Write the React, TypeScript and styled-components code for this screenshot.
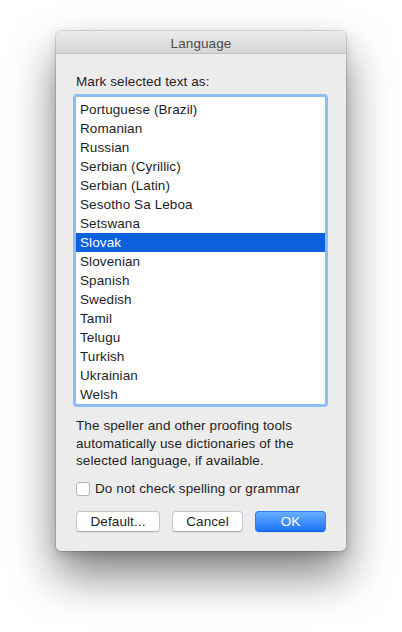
import React, { useState } from 'react'
import styled, { createGlobalStyle } from 'styled-components'

const languages = [
  'Portuguese (Brazil)',
  'Romanian',
  'Russian',
  'Serbian (Cyrillic)',
  'Serbian (Latin)',
  'Sesotho Sa Leboa',
  'Setswana',
  'Slovak',
  'Slovenian',
  'Spanish',
  'Swedish',
  'Tamil',
  'Telugu',
  'Turkish',
  'Ukrainian',
  'Welsh',
]

const GlobalStyle = createGlobalStyle`
  html, body {
    margin: 0;
    padding: 0;
    background: #ffffff;
  }
  body {
    font-family: 'Liberation Sans', Arial, sans-serif;
    -webkit-font-smoothing: antialiased;
  }
`

const Page = styled.div`
  width: 402px;
  height: 632px;
  display: flex;
  justify-content: center;
  padding-top: 31px;
  box-sizing: border-box;
`

const Window = styled.div`
  width: 290px;
  height: 520px;
  display: flex;
  flex-direction: column;
  background: #ececec;
  border-radius: 5px;
  box-shadow: 0 0 0 1px rgba(0, 0, 0, 0.12), 0 24px 46px rgba(0, 0, 0, 0.5),
    0 4px 10px rgba(0, 0, 0, 0.15);
  overflow: hidden;
`

const TitleBar = styled.div`
  height: 23px;
  padding-top: 2px;
  box-sizing: border-box;
  flex: none;
  display: flex;
  align-items: center;
  justify-content: center;
  background: linear-gradient(#ebebeb, #d6d6d6);
  border-bottom: 1px solid #c4c4c4;
  color: #4c4c4c;
  font-size: 13.5px;
  letter-spacing: 0.1px;
`

const Body = styled.div`
  display: flex;
  flex-direction: column;
  padding: 20px 20px 0 20px;
  color: #1e1e1e;
  font-size: 13.5px;
  letter-spacing: 0.1px;
`

const Label = styled.div`
  line-height: 16px;
  margin-bottom: 4px;
`

const ListBox = styled.div`
  width: 255px;
  height: 313px;
  margin-left: -3px;
  box-sizing: border-box;
  border: 3px solid #8fbcf4;
  border-radius: 4px;
  background: #ffffff;
  padding-top: 3px;
  overflow: hidden;
`

const Row = styled.div<{ $selected: boolean }>`
  height: 19px;
  line-height: 19px;
  padding-left: 4px;
  background: ${(p) => (p.$selected ? '#0b60dc' : 'transparent')};
  color: ${(p) => (p.$selected ? '#ffffff' : '#1e1e1e')};
  cursor: default;
`

const Description = styled.p`
  margin: 10px 0 0 0;
  line-height: 17.5px;
`

const CheckRow = styled.label`
  display: flex;
  align-items: center;
  gap: 5px;
  margin-top: 11px;
  height: 16px;
`

const Checkbox = styled.span`
  width: 12px;
  height: 12px;
  border: 1px solid #b4b4b4;
  border-radius: 3px;
  background: #ffffff;
  box-shadow: inset 0 1px 0 rgba(0, 0, 0, 0.04);
`

const Buttons = styled.div`
  display: flex;
  gap: 12px;
  margin-top: 14px;
`

const Button = styled.button<{ $primary?: boolean; $w: number }>`
  width: ${(p) => p.$w}px;
  height: 21px;
  padding: 0;
  font-family: inherit;
  font-size: 13.5px;
  letter-spacing: 0.1px;
  border-radius: 4px;
  border: 1px solid ${(p) => (p.$primary ? '#2b7cf7' : '#c6c6c6')};
  border-bottom-color: ${(p) => (p.$primary ? '#1a62e8' : '#b0b0b0')};
  background: ${(p) =>
    p.$primary ? 'linear-gradient(#67aefc, #1b73fa)' : '#ffffff'};
  color: ${(p) => (p.$primary ? '#ffffff' : '#1e1e1e')};
  box-shadow: 0 1px 0 rgba(0, 0, 0, 0.05);
`

const App = () => {
  const [selected, setSelected] = useState('Slovak')

  return (
    <Page>
      <GlobalStyle />
      <Window>
        <TitleBar>Language</TitleBar>
        <Body>
          <Label>Mark selected text as:</Label>
          <ListBox>
            {languages.map((lang) => (
              <Row
                key={lang}
                $selected={lang === selected}
                onClick={() => setSelected(lang)}
              >
                {lang}
              </Row>
            ))}
          </ListBox>
          <Description>
            The speller and other proofing tools automatically use dictionaries
            of the selected language, if available.
          </Description>
          <CheckRow>
            <Checkbox />
            Do not check spelling or grammar
          </CheckRow>
          <Buttons>
            <Button $w={84}>Default...</Button>
            <Button $w={71}>Cancel</Button>
            <Button $w={71} $primary>
              OK
            </Button>
          </Buttons>
        </Body>
      </Window>
    </Page>
  )
}

export default App
